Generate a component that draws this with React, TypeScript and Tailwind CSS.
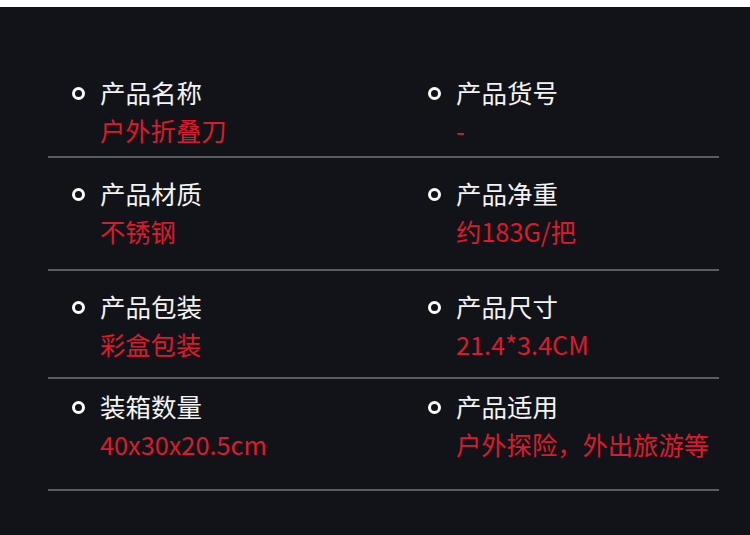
const rows = [
  {
    pad: "pt-[66px] pb-[7px]",
    items: [
      { title: "产品名称", value: "户外折叠刀" },
      { title: "产品货号", value: "-" },
    ],
  },
  {
    pad: "pt-[16px] pb-[19px]",
    items: [
      { title: "产品材质", value: "不锈钢" },
      { title: "产品净重", value: "约183G/把" },
    ],
  },
  {
    pad: "pt-[16px] pb-[14px]",
    items: [
      { title: "产品包装", value: "彩盒包装" },
      { title: "产品尺寸", value: "21.4*3.4CM" },
    ],
  },
  {
    pad: "pt-[8px] pb-[26px]",
    items: [
      { title: "装箱数量", value: "40x30x20.5cm" },
      { title: "产品适用", value: "户外探险，外出旅游等" },
    ],
  },
];

const Spec = ({ title, value }: { title: string; value: string }) => (
  <div className="flex flex-col">
    <div className="flex items-center gap-[15px]">
      <span className="mt-[3px] w-[13px] h-[13px] rounded-full border-[3px] border-white shrink-0" />
      <span className="text-[25.5px] leading-[38px] text-[#f4f4f4]">{title}</span>
    </div>
    <div className="pl-[28px] text-[25.3px] leading-[38px] text-[#dc1a2c]">{value}</div>
  </div>
);

export default function App() {
  return (
    <div
      className="w-[750px] h-[535px] bg-white"
      style={{ fontFamily: '"Noto Sans CJK SC", "Noto Sans", sans-serif' }}
    >
      <div className="mt-[7px] h-[528px] bg-[#121318] pl-[48px]">
        <div className="w-[671px]">
          {rows.map((row, i) => (
            <div key={i} className={`${row.pad} border-b-2 border-[#5a5b60]`}>
              <div className="grid grid-cols-[356px_1fr] pl-[24px]">
                {row.items.map((it) => (
                  <Spec key={it.title} title={it.title} value={it.value} />
                ))}
              </div>
            </div>
          ))}
        </div>
      </div>
    </div>
  );
}
